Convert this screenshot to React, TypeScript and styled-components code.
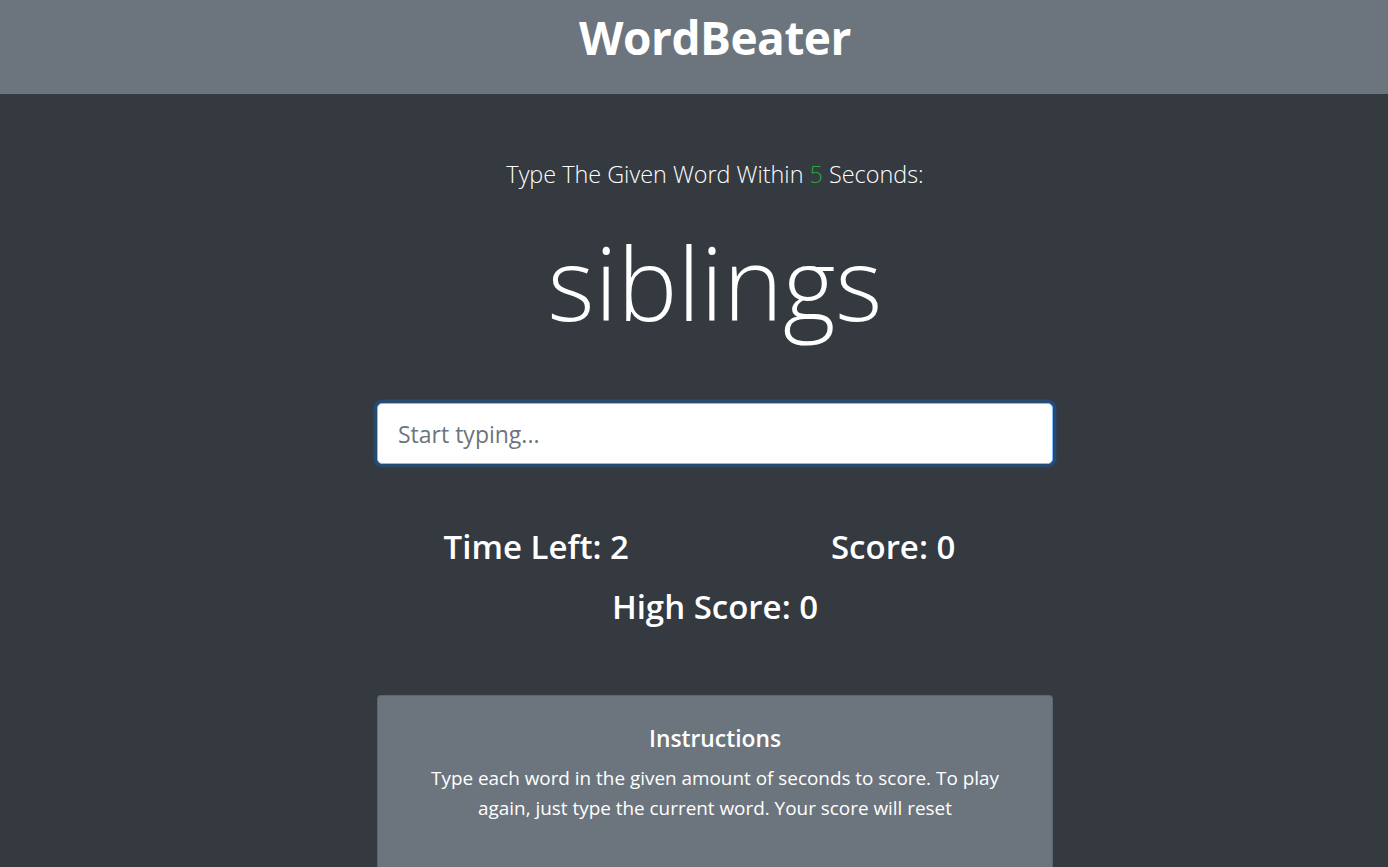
import React, { useState } from 'react';
import styled, { createGlobalStyle } from 'styled-components';

const fontStack = `"Open Sans", "Noto Sans", "Liberation Sans", sans-serif`;

const GlobalStyle = createGlobalStyle`
  html, body {
    margin: 0;
    padding: 0;
    background: #343a40;
    overflow: hidden;
  }
  body {
    font-family: ${fontStack};
    color: #fff;
  }
`;

// the screenshot is a crop of a wider window, content is centred at x=715
const Page = styled.div`
  width: 1430px;
  min-height: 867px;
  background: #343a40;
`;

const Header = styled.header`
  height: 94px;
  background: #6c757d;
  display: flex;
  align-items: center;
  justify-content: center;
`;

const Brand = styled.h1`
  margin: 0 0 20px;
  font-size: 46px;
  font-weight: 700;
  letter-spacing: -0.5px;
  color: #fff;
`;

const Main = styled.main`
  display: flex;
  flex-direction: column;
  align-items: center;
  padding-top: 57px;
`;

const Lead = styled.p`
  margin: 0;
  font-size: 23.4px;
  font-weight: 300;
  line-height: 46px;
  color: #fff;
`;

const Seconds = styled.span`
  color: #28a745;
`;

const CurrentWord = styled.h2`
  margin: 25px 0 0;
  font-size: 101px;
  font-weight: 300;
  line-height: 120px;
  color: #fff;
`;

const WordInput = styled.input`
  box-sizing: border-box;
  width: 676px;
  height: 61px;
  margin-top: 61px;
  padding: 0 20px;
  border: 1px solid #80bdff;
  border-radius: 5px;
  background: #fff;
  font-family: ${fontStack};
  font-size: 23px;
  color: #495057;
  outline: none;
  box-shadow: 0 0 0 3.5px rgba(0, 123, 255, 0.25);

  &::placeholder {
    color: #6c757d;
  }
`;

const StatsRow = styled.div`
  display: flex;
  justify-content: center;
  gap: 202px;
  margin-top: 62px;
  padding-right: 31px;
`;

const Stat = styled.h3`
  margin: 0;
  font-size: 33px;
  font-weight: 600;
  line-height: 42px;
  color: #fff;
`;

const HighScore = styled(Stat)`
  margin-top: 18px;
`;

const InstructionsCard = styled.section`
  box-sizing: border-box;
  width: 676px;
  min-height: 200px;
  margin-top: 67px;
  padding: 24px 40px;
  background: #6c757d;
  border: 1px solid rgba(0, 0, 0, 0.125);
  border-radius: 4px;
  text-align: center;
`;

const CardTitle = styled.h5`
  margin: 0 0 5px;
  font-size: 22.8px;
  font-weight: 600;
  line-height: 38px;
  color: #fff;
`;

const CardText = styled.p`
  margin: 0;
  font-size: 18.9px;
  line-height: 30px;
  color: #fff;
`;

export default function App() {
  const [value, setValue] = useState('');

  return (
    <Page>
      <GlobalStyle />
      <Header>
        <Brand>WordBeater</Brand>
      </Header>
      <Main>
        <Lead>
          Type The Given Word Within <Seconds>5</Seconds> Seconds:
        </Lead>
        <CurrentWord>siblings</CurrentWord>
        <WordInput
          type="text"
          placeholder="Start typing..."
          autoFocus
          value={value}
          onChange={(e) => setValue(e.target.value)}
        />
        <StatsRow>
          <Stat>Time Left: 2</Stat>
          <Stat>Score: 0</Stat>
        </StatsRow>
        <HighScore>High Score: 0</HighScore>
        <InstructionsCard>
          <CardTitle>Instructions</CardTitle>
          <CardText>
            Type each word in the given amount of seconds to score. To play
            again, just type the current word. Your score will reset
          </CardText>
        </InstructionsCard>
      </Main>
    </Page>
  );
}
